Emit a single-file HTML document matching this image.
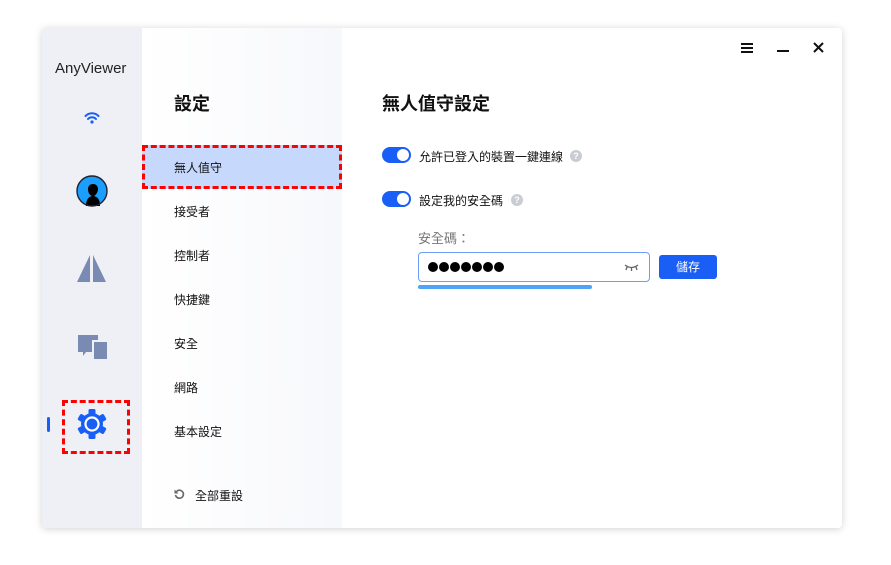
<!DOCTYPE html>
<html><head><meta charset="utf-8"><style>
*{margin:0;padding:0;box-sizing:border-box}
body{width:891px;height:565px;background:#fff;position:relative;font-family:"Liberation Sans","Noto Sans CJK TC",sans-serif;overflow:hidden}
.win{position:absolute;left:42px;top:28px;width:800px;height:500px;background:#fff;border-radius:4px;box-shadow:0 1px 8px rgba(0,0,0,.18);overflow:hidden}
.side{position:absolute;left:0;top:0;width:100px;height:500px;background:#eef0f5}
.mid{position:absolute;left:100px;top:0;width:200px;height:500px;background:linear-gradient(90deg,#fff,#f7f8fb)}
.t{position:absolute;white-space:nowrap}
.nav{position:absolute;left:32px;font-size:12px;color:#111}
.tog{position:absolute;width:29px;height:16px;border-radius:8px;background:#1a5ff5}
.tog::after{content:"";position:absolute;right:2px;top:2px;width:12px;height:12px;border-radius:50%;background:#fff}
.q{position:absolute;width:12px;height:12px;border-radius:50%;background:#c9ccd3;color:#fff;font-size:9px;text-align:center;line-height:12px;font-weight:bold}
.d{position:absolute;top:234px;width:10px;height:10px;border-radius:50%;background:#000}
</style></head><body>
<div class="win">
<div class="side">
<div class="t" style="left:13px;top:32px;font-size:15px;color:#222">AnyViewer</div>
<svg style="position:absolute;left:42px;top:83px" width="16" height="13" viewBox="0 0 16 13"><path d="M1.5 5a9 9 0 0 1 13 0M4 8a5.5 5.5 0 0 1 8 0" stroke="#1a5ff5" stroke-width="2" fill="none" stroke-linecap="round"/><circle cx="8" cy="11" r="1.6" fill="#1a5ff5"/></svg>
<svg style="position:absolute;left:34px;top:147px" width="32" height="32" viewBox="0 0 32 32"><circle cx="16" cy="16" r="15.5" fill="#1a9fff"/><path d="M10 31c0-6 2-9 6-10-3-1-4-4-4-7 0-3 2-5 5-5s5 2 5 5c0 3-2 6-4 7 4 1 6 4 6 10z" fill="#000"/><circle cx="16" cy="16" r="15" fill="none" stroke="#223" stroke-width="1.4"/></svg>
<svg style="position:absolute;left:34px;top:227px" width="32" height="28" viewBox="0 0 32 28"><path d="M14 0L1 27h13zM17 0v27h13z" fill="#7a8bb3"/></svg>
<svg style="position:absolute;left:35px;top:306px" width="32" height="26" viewBox="0 0 32 26"><path d="M1 1h20v5h-6v12h-6l-3 4v-4H1z M17 8h13v17H17z" fill="#7a8bb3"/></svg>
<div style="position:absolute;left:5px;top:389px;width:3px;height:15px;background:#1a5ff5;border-radius:2px"></div>
<svg style="position:absolute;left:34px;top:380px" width="32" height="32" viewBox="0 0 32 32"><g fill="#1a5ff5"><circle cx="16" cy="16" r="11"/><g id="k"><rect x="12.5" y="1" width="7" height="7" rx="1.5"/><rect x="12.5" y="24" width="7" height="7" rx="1.5"/></g><use href="#k" transform="rotate(60 16 16)"/><use href="#k" transform="rotate(120 16 16)"/></g><circle cx="16" cy="16" r="6.5" fill="none" stroke="#fff" stroke-width="2.2"/></svg>
<div style="position:absolute;left:20px;top:372px;width:68px;height:54px;border:3px dashed #f00"></div>
</div>
<div class="mid">
<div class="t" style="left:32px;top:62px;font-size:18px;font-weight:bold;color:#111">設定</div>
<div style="position:absolute;left:0;top:117px;width:200px;height:44px;background:#c6d8fc;border:3px dashed #f00"></div>
<div class="nav" style="top:131px">無人值守</div>
<div class="nav" style="top:175px">接受者</div>
<div class="nav" style="top:219px">控制者</div>
<div class="nav" style="top:263px">快捷鍵</div>
<div class="nav" style="top:307px">安全</div>
<div class="nav" style="top:351px">網路</div>
<div class="nav" style="top:395px">基本設定</div>
<svg style="position:absolute;left:32px;top:461px" width="11" height="11" viewBox="0 0 11 11"><path d="M2.5 2.5A4 4 0 1 1 1.5 6" stroke="#666" stroke-width="1.6" fill="none"/><path d="M0.5 0.5v4h4z" fill="#666"/></svg>
<div class="nav" style="left:53px;top:459px">全部重設</div>
</div>
<div class="t" style="left:340px;top:62px;font-size:18px;font-weight:bold;color:#111">無人值守設定</div>
<svg style="position:absolute;left:699px;top:15px" width="12" height="10"><path d="M0 1h12M0 5h12M0 9h12" stroke="#111" stroke-width="2"/></svg>
<div style="position:absolute;left:735px;top:22px;width:12px;height:2px;background:#111"></div>
<svg style="position:absolute;left:771px;top:14px" width="11" height="11"><path d="M1 1l9 9M10 1l-9 9" stroke="#111" stroke-width="2"/></svg>
<div class="tog" style="left:340px;top:119px"></div>
<div class="t" style="left:377px;top:120px;font-size:12px;color:#111">允許已登入的裝置一鍵連線</div>
<div class="q" style="left:528px;top:122px">?</div>
<div class="tog" style="left:340px;top:163px"></div>
<div class="t" style="left:377px;top:164px;font-size:12px;color:#111">設定我的安全碼</div>
<div class="q" style="left:469px;top:166px">?</div>
<div class="t" style="left:376px;top:200px;font-size:13px;color:#777">安全碼：</div>
<div style="position:absolute;left:376px;top:224px;width:232px;height:30px;border:1px solid #6f9cf5;border-radius:4px"></div>
<div class="d" style="left:386px"></div><div class="d" style="left:397px"></div><div class="d" style="left:408px"></div><div class="d" style="left:419px"></div><div class="d" style="left:430px"></div><div class="d" style="left:441px"></div><div class="d" style="left:452px"></div>
<svg style="position:absolute;left:582px;top:236px" width="15" height="7"><path d="M1 1q6.5 5 13 0M3 3l-1 3M7.5 4v3M12 3l1 3" stroke="#666" stroke-width="1.3" fill="none"/></svg>
<div style="position:absolute;left:376px;top:257px;width:174px;height:4px;background:#4da3f7;border-radius:2px"></div>
<div style="position:absolute;left:617px;top:227px;width:58px;height:24px;background:#1a5ff5;border-radius:3px;color:#fff;font-size:12px;text-align:center;line-height:24px">儲存</div>
</div>
</body></html>
